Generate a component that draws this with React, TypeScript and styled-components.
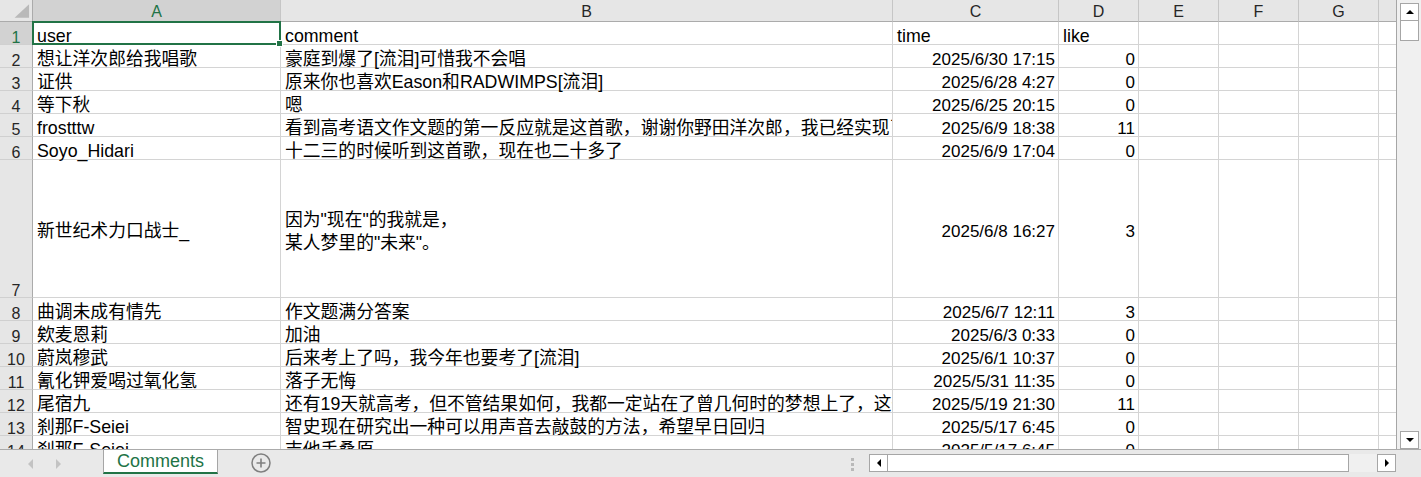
import React from "react";
import styled, { createGlobalStyle, css } from "styled-components";

const GREEN = "#217346";
const GRID = "#d4d4d4";

const GlobalStyle = createGlobalStyle`
  html, body {
    margin: 0;
    padding: 0;
    background: #ffffff;
    overflow: hidden;
  }
  body {
    font-family: "Liberation Sans", "Noto Sans CJK SC", sans-serif;
  }
`;

interface SheetRow {
  n: number;
  user: string;
  comment: string;
  time: string;
  like: string;
  height?: number;
}

const COLUMN_WIDTHS = [248, 612, 166, 80, 80, 80, 80, 80];
const LETTERS = ["A", "B", "C", "D", "E", "F", "G", "H"];

const ROWS: SheetRow[] = [
  { n: 1, user: "user", comment: "comment", time: "time", like: "like" },
  { n: 2, user: "想让洋次郎给我唱歌", comment: "豪庭到爆了[流泪]可惜我不会唱", time: "2025/6/30 17:15", like: "0" },
  { n: 3, user: "证供", comment: "原来你也喜欢Eason和RADWIMPS[流泪]", time: "2025/6/28 4:27", like: "0" },
  { n: 4, user: "等下秋", comment: "嗯", time: "2025/6/25 20:15", like: "0" },
  {
    n: 5,
    user: "frostttw",
    comment: "看到高考语文作文题的第一反应就是这首歌，谢谢你野田洋次郎，我已经实现了你说的未来",
    time: "2025/6/9 18:38",
    like: "11",
  },
  { n: 6, user: "Soyo_Hidari", comment: "十二三的时候听到这首歌，现在也二十多了", time: "2025/6/9 17:04", like: "0" },
  {
    n: 7,
    user: "新世纪术力口战士_",
    comment: "因为\"现在\"的我就是，\n某人梦里的\"未来\"。",
    time: "2025/6/8 16:27",
    like: "3",
    height: 138,
  },
  { n: 8, user: "曲调未成有情先", comment: "作文题满分答案", time: "2025/6/7 12:11", like: "3" },
  { n: 9, user: "欸麦恩莉", comment: "加油", time: "2025/6/3 0:33", like: "0" },
  { n: 10, user: "蔚岚穆武", comment: "后来考上了吗，我今年也要考了[流泪]", time: "2025/6/1 10:37", like: "0" },
  { n: 11, user: "氰化钾爱喝过氧化氢", comment: "落子无悔", time: "2025/5/31 11:35", like: "0" },
  {
    n: 12,
    user: "尾宿九",
    comment: "还有19天就高考，但不管结果如何，我都一定站在了曾几何时的梦想上了，这一次我不会再逃避",
    time: "2025/5/19 21:30",
    like: "11",
  },
  { n: 13, user: "刹那F-Seiei", comment: "智史现在研究出一种可以用声音去敲鼓的方法，希望早日回归", time: "2025/5/17 6:45", like: "0" },
  { n: 14, user: "刹那F-Seiei", comment: "吉他手桑原", time: "2025/5/17 6:45", like: "0" },
];

const Window = styled.div`
  width: 1421px;
  height: 477px;
  display: flex;
  flex-direction: column;
  background: #ffffff;
`;

const Main = styled.div`
  display: flex;
  height: 449px;
`;

const Viewport = styled.div`
  flex: 0 0 1397px;
  box-sizing: border-box;
  border-right: 1px solid #a6a6a6;
  overflow: hidden;
`;

const Sheet = styled.div<{ $rows: string }>`
  display: grid;
  grid-template-columns: 33px ${COLUMN_WIDTHS.map((w) => `${w}px`).join(" ")};
  grid-template-rows: ${(p) => p.$rows};
`;

const Corner = styled.div`
  box-sizing: border-box;
  background: #e6e6e6;
  border-right: 1px solid #ababab;
  border-bottom: 1px solid #ababab;
  display: flex;
`;

const ColHead = styled.div<{ $active?: boolean }>`
  box-sizing: border-box;
  background: ${(p) => (p.$active ? "#d2d2d2" : "#e6e6e6")};
  color: ${(p) => (p.$active ? GREEN : "#262626")};
  border-right: 1px solid #c6c6c6;
  border-bottom: 1px solid #ababab;
  display: flex;
  align-items: center;
  justify-content: center;
  padding-top: 2px;
  font-size: 16px;
  line-height: 20px;
`;

const RowHead = styled.div<{ $active?: boolean }>`
  box-sizing: border-box;
  background: ${(p) => (p.$active ? "#d2d2d2" : "#e6e6e6")};
  color: ${(p) => (p.$active ? GREEN : "#262626")};
  border-right: 1px solid #ababab;
  border-bottom: 1px solid #d0d0d0;
  display: flex;
  align-items: flex-end;
  justify-content: center;
  font-size: 16px;
  line-height: 12px;
`;

const Cell = styled.div<{ $align?: "left" | "right"; $size?: number; $selected?: boolean }>`
  box-sizing: border-box;
  position: relative;
  border-right: 1px solid ${GRID};
  border-bottom: 1px solid ${GRID};
  padding: 6px 3px 0 4px;
  display: flex;
  align-items: center;
  justify-content: ${(p) => (p.$align === "right" ? "flex-end" : "flex-start")};
  font-size: ${(p) => p.$size ?? 17.5}px;
  line-height: 23px;
  color: #000000;
  white-space: pre;
  overflow-x: clip;
  overflow-y: visible;

  ${(p) =>
    p.$selected &&
    css`
      overflow: visible;
      z-index: 2;

      &::after {
        content: "";
        position: absolute;
        left: -1px;
        top: -1px;
        right: -1px;
        bottom: -1px;
        border: 2px solid ${GREEN};
        pointer-events: none;
      }

      &::before {
        content: "";
        position: absolute;
        right: -3px;
        bottom: -3px;
        width: 5px;
        height: 5px;
        background: ${GREEN};
        border: 1px solid #ffffff;
        z-index: 1;
      }
    `}
`;

const VScroll = styled.div`
  flex: 1;
  background: #f0f0f0;
  display: flex;
  flex-direction: column;
  padding: 3px 2px 0 3px;
`;

const ScrollButton = styled.div`
  box-sizing: border-box;
  width: 19px;
  height: 18px;
  flex: 0 0 18px;
  background: #ffffff;
  border: 1px solid #a6a6a6;
  display: flex;
  align-items: center;
  justify-content: center;
`;

const VThumb = styled.div`
  box-sizing: border-box;
  width: 19px;
  height: 21px;
  margin-top: -1px;
  background: #ffffff;
  border: 1px solid #a6a6a6;
`;

const Fill = styled.div`
  flex: 1;
`;

const Arrow = styled.span<{ $dir: "up" | "down" | "left" | "right"; $color?: string; $size?: number }>`
  width: 0;
  height: 0;
  ${(p) => {
    const c = p.$color ?? "#000000";
    const s = p.$size ?? 4;
    switch (p.$dir) {
      case "up":
        return css`
          border-left: ${s}px solid transparent;
          border-right: ${s}px solid transparent;
          border-bottom: ${s}px solid ${c};
        `;
      case "down":
        return css`
          border-left: ${s}px solid transparent;
          border-right: ${s}px solid transparent;
          border-top: ${s}px solid ${c};
        `;
      case "left":
        return css`
          border-top: ${s}px solid transparent;
          border-bottom: ${s}px solid transparent;
          border-right: ${s}px solid ${c};
        `;
      default:
        return css`
          border-top: ${s}px solid transparent;
          border-bottom: ${s}px solid transparent;
          border-left: ${s}px solid ${c};
        `;
    }
  }}
`;

const TabBar = styled.div`
  box-sizing: border-box;
  height: 28px;
  border-top: 1px solid #ababab;
  background: #e9e9e9;
  display: flex;
  align-items: flex-start;
`;

const TabNav = styled.div`
  width: 103px;
  height: 27px;
  display: flex;
  align-items: center;
  gap: 23px;
  padding-left: 28px;
  box-sizing: border-box;
`;

const SheetTab = styled.div<{ $active?: boolean }>`
  box-sizing: border-box;
  width: 115px;
  height: 24px;
  background: ${(p) => (p.$active ? "#ffffff" : "transparent")};
  border-left: 1px solid #a6a6a6;
  border-right: 1px solid #a6a6a6;
  border-bottom: 2px solid ${(p) => (p.$active ? GREEN : "transparent")};
  color: ${(p) => (p.$active ? GREEN : "#262626")};
  display: flex;
  align-items: center;
  justify-content: center;
  font-size: 18px;
  line-height: 22px;
`;

const AddSheet = styled.div`
  width: 20px;
  height: 20px;
  margin: 3px 0 0 33px;
  display: flex;
`;

const Splitter = styled.div`
  display: flex;
  flex-direction: column;
  gap: 2px;
  margin: 8px 15px 0 0;
  span {
    width: 3px;
    height: 3px;
    background: #b9b9b9;
  }
`;

const HScroll = styled.div`
  display: flex;
  width: 527px;
  height: 18px;
  margin: 4px 25px 0 0;
`;

const HButton = styled(ScrollButton)`
  width: 19px;
  flex: 0 0 19px;
`;

const HThumb = styled.div`
  box-sizing: border-box;
  flex: 0 0 462px;
  height: 18px;
  margin-left: -1px;
  background: #ffffff;
  border: 1px solid #a6a6a6;
`;

const HTrack = styled.div`
  flex: 1;
  background: #f0f0f0;
`;

const TEXT_SIZE = 17.8;
const NUMBER_SIZE = 17;

const App: React.FC = () => {
  const rowTemplate = ["22px", ...ROWS.map((r) => `${r.height ?? 23}px`)].join(" ");

  return (
    <>
      <GlobalStyle />
      <Window>
        <Main>
          <Viewport>
            <Sheet $rows={rowTemplate}>
              <Corner>
                <svg width="33" height="22" viewBox="0 0 33 22">
                  <polygon points="15,18 30,18 30,4" fill="#b9b9b9" />
                </svg>
              </Corner>
              {LETTERS.map((l, i) => (
                <ColHead key={l} $active={i === 0}>
                  {l}
                </ColHead>
              ))}
              {ROWS.map((r) => {
                const isHeader = r.n === 1;
                return (
                  <React.Fragment key={r.n}>
                    <RowHead $active={isHeader}>{r.n}</RowHead>
                    <Cell $selected={isHeader} $size={TEXT_SIZE}>
                      {r.user}
                    </Cell>
                    <Cell $size={TEXT_SIZE}>{r.comment}</Cell>
                    <Cell $align={isHeader ? "left" : "right"} $size={isHeader ? TEXT_SIZE : NUMBER_SIZE}>
                      {r.time}
                    </Cell>
                    <Cell $align={isHeader ? "left" : "right"} $size={isHeader ? TEXT_SIZE : NUMBER_SIZE}>
                      {r.like}
                    </Cell>
                    <Cell />
                    <Cell />
                    <Cell />
                    <Cell />
                  </React.Fragment>
                );
              })}
            </Sheet>
          </Viewport>
          <VScroll>
            <ScrollButton>
              <Arrow $dir="up" />
            </ScrollButton>
            <VThumb />
            <Fill />
            <ScrollButton>
              <Arrow $dir="down" />
            </ScrollButton>
          </VScroll>
        </Main>

        <TabBar>
          <TabNav>
            <Arrow $dir="left" $color="#c3c3c3" $size={5} />
            <Arrow $dir="right" $color="#c3c3c3" $size={5} />
          </TabNav>
          <SheetTab $active>Comments</SheetTab>
          <AddSheet>
            <svg width="20" height="20" viewBox="0 0 20 20">
              <circle cx="10" cy="10" r="9" fill="none" stroke="#7f7f7f" strokeWidth="1.5" />
              <path d="M10 5.5v9M5.5 10h9" stroke="#7f7f7f" strokeWidth="1.6" />
            </svg>
          </AddSheet>
          <Fill />
          <Splitter>
            <span />
            <span />
            <span />
          </Splitter>
          <HScroll>
            <HButton>
              <Arrow $dir="left" />
            </HButton>
            <HThumb />
            <HTrack />
            <HButton>
              <Arrow $dir="right" />
            </HButton>
          </HScroll>
        </TabBar>
      </Window>
    </>
  );
};

export default App;
